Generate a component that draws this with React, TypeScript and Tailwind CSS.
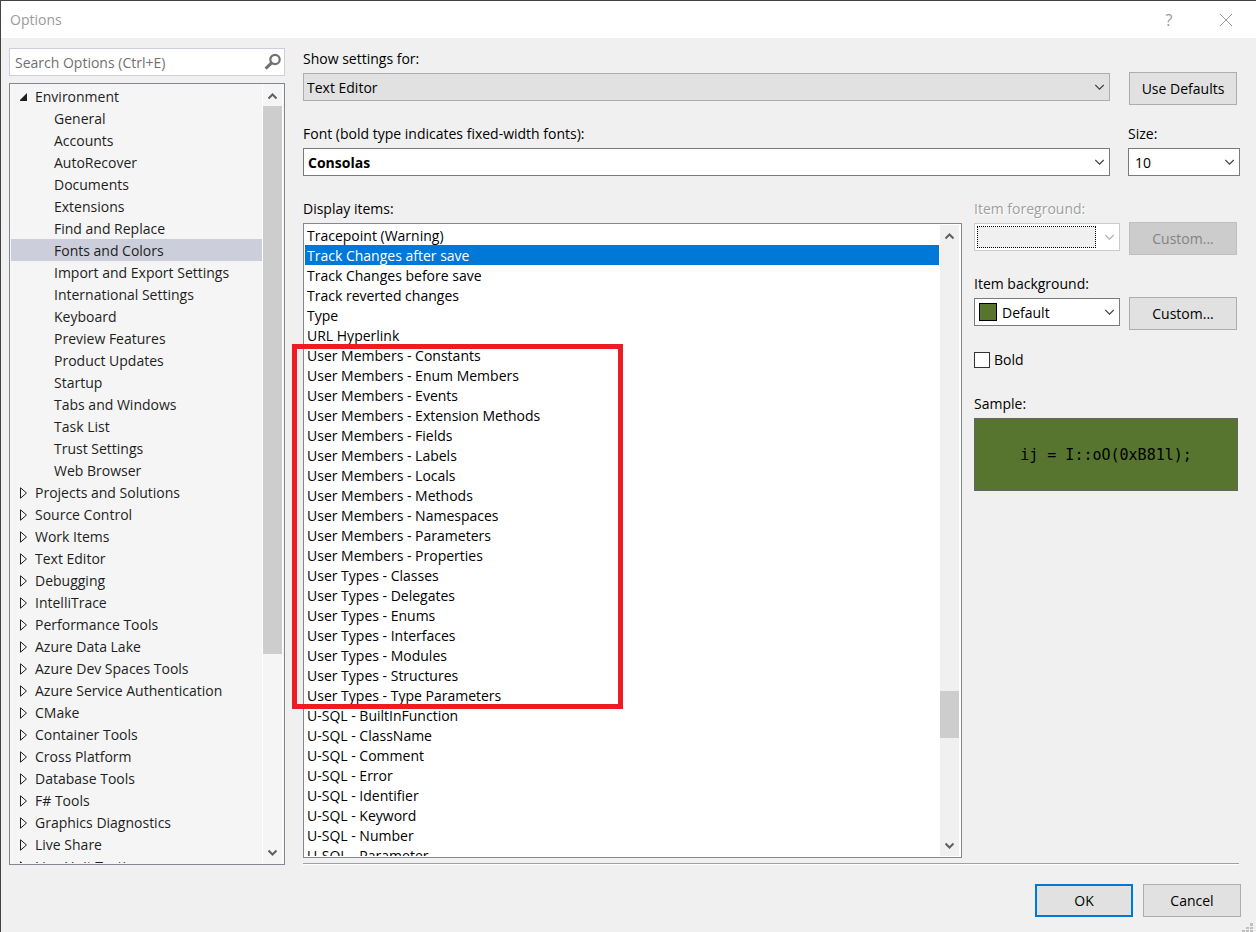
/*
 * Options dialog, Environment > Fonts and Colors page.
 * Settings tree on the left, font and color controls on the right.
 */

import type { ReactNode } from "react";

const ENVIRONMENT_PAGES = [
  "General", "Accounts", "AutoRecover", "Documents", "Extensions", "Find and Replace",
  "Fonts and Colors", "Import and Export Settings", "International Settings", "Keyboard",
  "Preview Features", "Product Updates", "Startup", "Tabs and Windows", "Task List",
  "Trust Settings", "Web Browser",
];

const CATEGORIES = [
  "Projects and Solutions", "Source Control", "Work Items", "Text Editor", "Debugging",
  "IntelliTrace", "Performance Tools", "Azure Data Lake", "Azure Dev Spaces Tools",
  "Azure Service Authentication", "CMake", "Container Tools", "Cross Platform",
  "Database Tools", "F# Tools", "Graphics Diagnostics", "Live Share", "Live Unit Testing",
];

const DISPLAY_ITEMS = [
  "Tracepoint (Warning)", "Track Changes after save", "Track Changes before save",
  "Track reverted changes", "Type", "URL Hyperlink",
  "User Members - Constants", "User Members - Enum Members", "User Members - Events",
  "User Members - Extension Methods", "User Members - Fields", "User Members - Labels",
  "User Members - Locals", "User Members - Methods", "User Members - Namespaces",
  "User Members - Parameters", "User Members - Properties",
  "User Types - Classes", "User Types - Delegates", "User Types - Enums",
  "User Types - Interfaces", "User Types - Modules", "User Types - Structures",
  "User Types - Type Parameters",
  "U-SQL - BuiltInFunction", "U-SQL - ClassName", "U-SQL - Comment", "U-SQL - Error",
  "U-SQL - Identifier", "U-SQL - Keyword", "U-SQL - Number", "U-SQL - Parameter",
];

const SELECTED_PAGE = "Fonts and Colors";
const SELECTED_ITEM = "Track Changes after save";

function ScrollArrow({ down = false }: { down?: boolean }) {
  return (
    <svg width="10" height="8" viewBox="0 0 10 8" fill="none" stroke="#606060" strokeWidth="2">
      <path d={down ? "M0.5 1.5 L4.5 5.5 L8.5 1.5" : "M0.5 6.5 L4.5 2.5 L8.5 6.5"} />
    </svg>
  );
}

function ScrollBar({ start, size, track }: { start: number; size: number; track: string }) {
  return (
    <div className={`flex w-[21px] shrink-0 flex-col border-x border-white ${track}`}>
      <button type="button" aria-label="Scroll up" className="flex h-[21px] shrink-0 items-center pl-[5px]">
        <ScrollArrow />
      </button>
      <div className="relative flex-1">
        <div className="absolute inset-x-0 bg-[#cdcdcd]" style={{ top: `${start}%`, height: `${size}%` }} />
      </div>
      <button type="button" aria-label="Scroll down" className="flex h-[21px] shrink-0 items-center pl-[5px]">
        <ScrollArrow down />
      </button>
    </div>
  );
}

type ComboProps = {
  id: string;
  label: string;
  value: string;
  look: string;
  disabled?: boolean;
  children?: ReactNode;
};

function Combo({ id, label, value, look, disabled, children }: ComboProps) {
  return (
    <div className="flex min-w-0 flex-1 flex-col gap-1">
      <label
        htmlFor={id}
        className={disabled ? "text-[#a0a0a0] [text-shadow:1px_1px_0_#fff]" : ""}
      >
        {label}
      </label>
      <div className="relative">
        <select
          id={id}
          disabled={disabled}
          className={`block h-7 w-full appearance-none border pt-[2px] pr-6 opacity-100 outline-none ${look}`}
        >
          <option>{value}</option>
        </select>
        {children}
        <svg
          className="pointer-events-none absolute top-[11px] right-[5px]"
          width="10"
          height="7"
          viewBox="0 0 10 7"
          fill="none"
          stroke={disabled ? "#b0b0b0" : "#404040"}
          strokeWidth="1.2"
        >
          <path d="M0.3 1 L4.5 5.2 L8.7 1" />
        </svg>
      </div>
    </div>
  );
}

const SIDE_BUTTON = "mt-[23px] h-[33px] w-[108px] shrink-0 border";
const TREE_ROW = "flex h-[22px] w-full items-center gap-[7px] pt-[2px] pl-[9px] text-left";

export default function App() {
  return (
    <div className="flex h-screen flex-col overflow-hidden border-t border-l border-[#434346] bg-[#f0f0f0] font-['Open_Sans','Noto_Sans',sans-serif] text-sm leading-5 text-black">
      {/* Title bar */}
      <header className="flex h-[37px] shrink-0 items-center bg-white pr-6 pl-[9px] text-[#999999]">
        <h1 className="flex-1">Options</h1>
        <button type="button" aria-label="Help" className="mr-[45px] w-3 text-base">?</button>
        <button type="button" aria-label="Close">
          <svg width="12" height="12" viewBox="0 0 12 12" stroke="#999999">
            <path d="M0 0 L12 12 M12 0 L0 12" />
          </svg>
        </button>
      </header>

      <div className="flex min-h-0 flex-1 gap-[18px] pt-[10px] pr-4 pl-2">
        {/* Settings tree */}
        <aside className="flex w-[276px] shrink-0 flex-col gap-[7px] text-[#1e1e1e]">
          <div className="relative shrink-0">
            <input
              type="text"
              aria-label="Search Options"
              placeholder="Search Options (Ctrl+E)"
              className="block h-7 w-full border border-[#cccedb] bg-white pr-8 pl-[5px] outline-none placeholder:text-[#717171]"
            />
            <svg
              className="absolute top-[5px] right-[3px]"
              width="18"
              height="18"
              viewBox="0 0 18 18"
              fill="none"
              stroke="#717171"
            >
              <circle cx="11" cy="6.5" r="4.7" strokeWidth="2.2" />
              <path d="M7.6 9.8 L1.6 15.6" strokeWidth="3" />
            </svg>
          </div>

          <nav className="flex min-h-0 flex-1 border border-[#828790] bg-[#f5f5f5] p-px">
            <ul className="min-w-0 flex-1 overflow-hidden">
              <li>
                <button type="button" className={TREE_ROW}>
                  <svg width="8" height="8" viewBox="0 0 8 8" fill="#1e1e1e">
                    <path d="M7 0 V8 H0 V7 Z" />
                  </svg>
                  Environment
                </button>
                <ul>
                  {ENVIRONMENT_PAGES.map((page) => (
                    <li key={page}>
                      <button
                        type="button"
                        className={`block h-[22px] w-full pt-[2px] pl-[43px] text-left ${page === SELECTED_PAGE ? "bg-[#cccedb]" : ""}`}
                      >
                        {page}
                      </button>
                    </li>
                  ))}
                </ul>
              </li>
              {CATEGORIES.map((category) => (
                <li key={category}>
                  <button type="button" className={TREE_ROW}>
                    <svg width="8" height="12" viewBox="0 0 8 12" fill="none" stroke="#1e1e1e">
                      <path d="M0.5 0.8 L6.5 6 L0.5 11.2 Z" />
                    </svg>
                    {category}
                  </button>
                </li>
              ))}
            </ul>
            <ScrollBar start={0} size={74.5} track="bg-[#f5f5f5]" />
          </nav>
        </aside>

        {/* Fonts and Colors page */}
        <main className="flex min-w-0 flex-1 flex-col">
          <div className="flex min-h-0 flex-1 flex-col gap-[19px] pt-px">
            <div className="flex h-14 shrink-0 gap-[19px]">
              <Combo id="settings" label="Show settings for:" value="Text Editor" look="border-[#adadad] bg-[#e1e1e1] pl-[3px]" />
              <button type="button" className={`${SIDE_BUTTON} mr-[3px] border-[#adadad] bg-[#e1e1e1]`}>
                Use Defaults
              </button>
            </div>

            <div className="flex h-14 shrink-0 gap-[18px]">
              <Combo id="font" label="Font (bold type indicates fixed-width fonts):" value="Consolas" look="border-[#7a7a7a] bg-white pl-1 font-bold" />
              <div className="flex w-28 shrink-0">
                <Combo id="size" label="Size:" value="10" look="border-[#7a7a7a] bg-white pl-[6px]" />
              </div>
            </div>

            <div className="flex min-h-0 flex-1 gap-3">
              <div className="flex min-w-0 flex-1 flex-col gap-1">
                <h2 id="items">Display items:</h2>
                <div className="relative flex min-h-0 flex-1 border border-[#828790] bg-white p-px">
                  <ul aria-labelledby="items" className="min-w-0 flex-1 overflow-hidden">
                    {DISPLAY_ITEMS.map((item) => (
                      <li key={item}>
                        <button
                          type="button"
                          className={`block h-5 w-full pt-px pl-[2px] text-left ${item === SELECTED_ITEM ? "bg-[#0078d7] text-white" : ""}`}
                        >
                          {item}
                        </button>
                      </li>
                    ))}
                  </ul>
                  <ScrollBar start={75.5} size={8.1} track="bg-[#f0f0f0]" />
                  {/* Callout around the user members and user types */}
                  <div className="pointer-events-none absolute top-[120px] -left-3 h-[365px] w-[331px] border-5 border-[#ed1c24]" />
                </div>
              </div>

              <div className="mr-[2px] flex w-[264px] shrink-0 flex-col">
                <div className="mb-[19px] flex h-14 gap-[9px]">
                  <Combo id="foreground" label="Item foreground:" value="" look="border-[#cccccc] bg-white" disabled>
                    <div className="absolute top-[3px] right-6 bottom-[3px] left-[3px] border border-dotted border-black bg-[#f0f0f0]" />
                  </Combo>
                  <button type="button" disabled className={`${SIDE_BUTTON} mr-px border-[#bfbfbf] bg-[#cccccc] text-[#838383]`}>
                    Custom...
                  </button>
                </div>
                <div className="mb-[19px] flex h-14 gap-[9px]">
                  <Combo id="background" label="Item background:" value="Default" look="border-[#7a7a7a] bg-white pl-[27px]">
                    <div className="absolute top-[5px] left-[5px] size-[18px] border border-black bg-[#57752f]" />
                  </Combo>
                  <button type="button" className={`${SIDE_BUTTON} mr-px border-[#adadad] bg-[#e1e1e1]`}>
                    Custom...
                  </button>
                </div>
                <label className="mb-[23px] flex h-[22px] items-center gap-1">
                  <input type="checkbox" className="size-4 appearance-none border border-[#333333] bg-white" />
                  Bold
                </label>
                <h2 className="mb-1">Sample:</h2>
                <div className="flex h-[73px] items-center justify-center border border-[#646464] bg-[#57752f] font-['DejaVu_Sans_Mono','Liberation_Mono',monospace] text-[15px]">
                  ij = I::oO(0xB81l);
                </div>
              </div>
            </div>
          </div>
          <hr className="mt-[5px] mr-px h-[2px] border-t border-b border-t-[#a0a0a0] border-b-white" />
        </main>
      </div>

      <footer className="relative flex h-[67px] shrink-0 items-start justify-end gap-[10px] pt-[19px] pr-[15px]">
        <button type="button" className="h-[33px] w-[98px] border-2 border-[#0078d7] bg-[#e1e1e1]">OK</button>
        <button type="button" className="h-[33px] w-[98px] border border-[#adadad] bg-[#e1e1e1]">Cancel</button>
        {/* Resize grip */}
        <svg className="absolute right-[3px] bottom-0" width="11" height="9" viewBox="0 0 11 9" fill="#bfbfbf">
          <path d="M8 0h3v3h-3z M4 4h3v2h-3z M8 4h3v2h-3z M0 7h3v2h-3z M4 7h3v2h-3z M8 7h3v2h-3z" />
        </svg>
      </footer>
    </div>
  );
}
